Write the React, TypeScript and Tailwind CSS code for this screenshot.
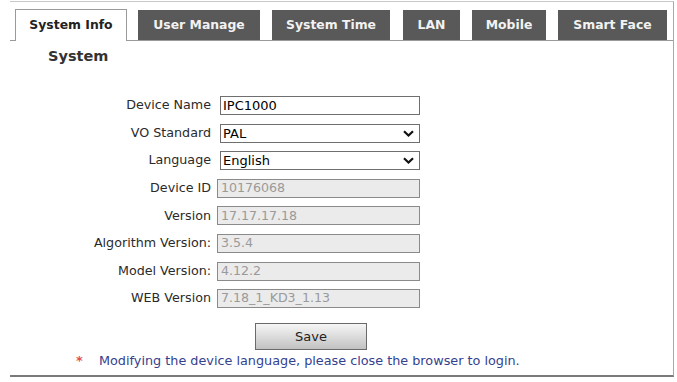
const font = { fontFamily: '"DejaVu Sans", Verdana, sans-serif' };

const tabs = [
  { label: "System Info", w: "w-[112px]", active: true },
  { label: "User Manage", w: "w-[122px] ml-[11px]" },
  { label: "System Time", w: "w-[118px] ml-[12px]" },
  { label: "LAN", w: "w-[57px] ml-[13px]" },
  { label: "Mobile", w: "w-[74px] ml-[12px]" },
  { label: "Smart Face", w: "w-[109px] ml-[12px]" },
];

const Chevron = () => (
  <svg width="11" height="7" viewBox="0 0 11 7" className="shrink-0">
    <path d="M1 1.2 L5.5 5.5 L10 1.2" fill="none" stroke="#111" strokeWidth="2.2" />
  </svg>
);

type Row = { label: string; value: string; kind: "text" | "select" | "disabled" };

const rows: Row[] = [
  { label: "Device Name", value: "IPC1000", kind: "text" },
  { label: "VO Standard", value: "PAL", kind: "select" },
  { label: "Language", value: "English", kind: "select" },
  { label: "Device ID", value: "10176068", kind: "disabled" },
  { label: "Version", value: "17.17.17.18", kind: "disabled" },
  { label: "Algorithm Version:", value: "3.5.4", kind: "disabled" },
  { label: "Model Version:", value: "4.12.2", kind: "disabled" },
  { label: "WEB Version", value: "7.18_1_KD3_1.13", kind: "disabled" },
];

const Field = ({ row }: { row: Row }) => {
  if (row.kind === "disabled") {
    return (
      <div className="flex h-[19px] w-[203px] items-center border border-[#8a8a8a] bg-[#ebebeb] pl-[3px] text-[12.6px] leading-none text-[#9a9a9a]">
        {row.value}
      </div>
    );
  }
  return (
    <div className="ml-[3px] flex h-[19px] w-[200px] items-center justify-between border border-[#6f6f6f] bg-white pl-[2px] pr-[5px] text-[13px] leading-none text-black">
      <span>{row.value}</span>
      {row.kind === "select" && <Chevron />}
    </div>
  );
};

export default function App() {
  return (
    <div className="h-[382px] w-[677px] overflow-hidden bg-white" style={font}>
      <div className="ml-[10px] mt-[1px] flex h-[376px] w-[664px] flex-col border-t border-r border-b-2 border-t-[#c8c8c8] border-r-[#a8a8a8] border-b-[#7a7a7a]">
        <div className="flex h-[39px] items-end border-b border-[#9a9a9a] pl-[5px]">
          {tabs.map((t) =>
            t.active ? (
              <div
                key={t.label}
                className={`${t.w} -mb-px flex h-[32px] items-center justify-center border-x border-t border-[#9a9a9a] bg-white text-[12.4px] font-bold text-[#222]`}
              >
                {t.label}
              </div>
            ) : (
              <div
                key={t.label}
                className={`${t.w} flex h-[30px] items-center justify-center bg-[#595959] text-[12.4px] font-bold text-[#f2f2f2]`}
              >
                {t.label}
              </div>
            )
          )}
        </div>

        <div className="ml-[38px] mt-[6px] text-[14.5px] font-bold leading-[18px] text-[#333]">System</div>

        <div className="mt-[31px] flex flex-col gap-[8.6px]">
          {rows.map((r) => (
            <div key={r.label} className="flex h-[19px] items-center">
              <div className="w-[201px] text-right text-[12.7px] leading-none text-[#2a2a2a]">{r.label}</div>
              <div className="ml-[6px]">
                <Field row={r} />
              </div>
            </div>
          ))}
        </div>

        <div className="ml-[245px] mt-[15px] flex h-[27px] w-[112px] items-center justify-center border border-[#6a6a6a] bg-gradient-to-b from-[#f6f6f6] to-[#c2c2c2] text-[13px] text-[#222]">
          Save
        </div>

        <div className="mt-[3px] flex h-[16px] items-center text-[12.8px] leading-none">
          <span className="ml-[66px] w-[23px] font-bold text-[#e05050]">*</span>
          <span className="text-[#34418f]">Modifying the device language, please close the browser to login.</span>
        </div>
      </div>
    </div>
  );
}
